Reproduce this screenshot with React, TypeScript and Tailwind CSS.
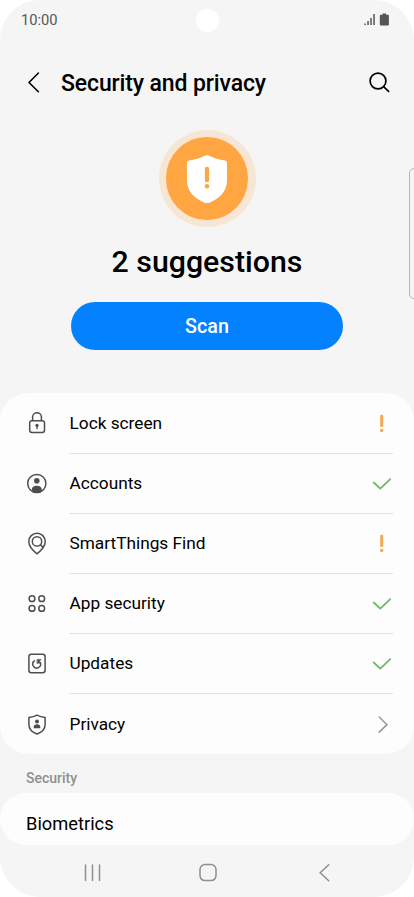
import type { ReactNode } from "react";

type Status = "warning" | "ok" | "more";

const items: { label: string; icon: string; status: Status }[] = [
  { label: "Lock screen", icon: "lock", status: "warning" },
  { label: "Accounts", icon: "account", status: "ok" },
  { label: "SmartThings Find", icon: "find", status: "warning" },
  { label: "App security", icon: "apps", status: "ok" },
  { label: "Updates", icon: "update", status: "ok" },
  { label: "Privacy", icon: "privacy", status: "more" },
];

const icons: Record<string, ReactNode> = {
  lock: (
    <>
      <rect x="4.7" y="8.7" width="14.8" height="11.8" rx="2.2" />
      <path d="M7.6 8.5V5.1a4.4 4.4 0 0 1 8.8 0v3.4" />
      <circle cx="12" cy="13.3" r="1.6" fill="currentColor" stroke="none" />
      <path d="M12 13.5v3.2" strokeWidth="1.3" />
    </>
  ),
  account: (
    <>
      <circle cx="11.8" cy="11.5" r="9.1" />
      <circle cx="11.8" cy="8.8" r="2.8" fill="currentColor" stroke="none" />
      <path d="M6.8 18.9v-1.2c0-2.4 1.900-3.900 5-3.900s5 1.500 5 3.900v1.200a9 9 0 0 1-10 0z" fill="currentColor" stroke="none" />
    </>
  ),
  find: (
    <>
      <path d="M12 21.800C8 18.600 3.800 14.200 3.800 9.400a8.200 8.200 0 0 1 16.400 0c0 4.800-4.200 9.200-8.200 12.400z" />
      <circle cx="12" cy="9.400" r="4.700" />
      <path d="M15.300 12.700l2.900 2.700" />
    </>
  ),
  apps: (
    <>
      <circle cx="7" cy="6.700" r="2.900" />
      <circle cx="16.700" cy="6.700" r="2.900" />
      <circle cx="7" cy="16.400" r="2.900" />
      <circle cx="16.700" cy="16.400" r="2.900" />
    </>
  ),
  update: (
    <>
      <rect x="3.900" y="2.200" width="16.200" height="18.600" rx="2.500" />
      <path d="M9.400 8.900a3.900 3.900 0 1 0 5.900 1.700" />
      <path d="M12.300 7.400h3.900l-1.700 1.500.3 2.200-2.500.3z" fill="currentColor" strokeWidth="0.600" />
    </>
  ),
  privacy: (
    <>
      <path d="M12 2.100c2.500 1.300 5 2 8.100 2.400v7.200c0 4.700-3.600 7.600-8.100 9.300-4.500-1.700-8.100-4.600-8.100-9.300V4.500c3.100-.4 5.600-1.100 8.100-2.400z" />
      <circle cx="12" cy="8.500" r="2" fill="currentColor" stroke="none" />
      <path d="M8.700 15.200V14c0-1.700 1.400-2.700 3.300-2.700s3.300 1 3.300 2.700v1.200z" fill="currentColor" stroke="none" />
    </>
  ),
};

const StatusIcon = ({ status }: { status: Status }) => {
  if (status === "warning") {
    return (
      <svg viewBox="0 0 20 24" className="h-6 w-5 text-[#f3a952]" fill="currentColor">
        <rect x="8.200" y="2.700" width="3" height="12.300" rx="1.200" />
        <circle cx="9.700" cy="18.400" r="1.700" />
      </svg>
    );
  }
  if (status === "ok") {
    return (
      <svg viewBox="0 0 20 24" className="h-6 w-5 text-[#6aba64]" fill="none" stroke="currentColor" strokeWidth="1.800" strokeLinecap="round" strokeLinejoin="round">
        <path d="M1.700 10.500l6.600 6.100L18.200 7.100" />
      </svg>
    );
  }
  return (
    <svg viewBox="0 0 20 24" className="h-6 w-5 text-[#99999b]" fill="none" stroke="currentColor" strokeWidth="1.600" strokeLinecap="round" strokeLinejoin="round">
      <path d="M7.200 4l7.800 7.700-7.800 7.500" />
    </svg>
  );
};

const StatusBar = () => (
  <div className="relative h-10 flex justify-between items-center pl-[21px] pr-[25px] text-[#555]">
    <span className="text-[14.7px]">10:00</span>
    <div className="absolute left-[196px] top-[9px] h-[23px] w-[23px] rounded-full bg-white" />
    <svg viewBox="0 0 25 14" className="h-3.5 w-[25px]" fill="currentColor">
      <path d="M.3 10.500h1.500V12H.3zM3.300 8h1.500v4H3.300zM6.300 5h1.500v7H6.300zM9.300 1h1.500v11H9.300z" />
      <path d="M18.500.600h3.600v1.200H24a.9.900 0 0 1 .900.900v8.900a.9.900 0 0 1-.9.900h-7.300a.9.900 0 0 1-.9-.9V2.700a.9.900 0 0 1 .9-.9h1.800z" />
    </svg>
  </div>
);

const Header = () => (
  <header className="h-[90px] flex items-center pl-[25px] pr-[23px] pb-1.5">
    <svg viewBox="0 0 20 24" className="h-6 w-5" fill="none" stroke="currentColor" strokeWidth="1.600" strokeLinecap="round" strokeLinejoin="round">
      <path d="M13.400 3L4 12.500l9.400 9.200" />
    </svg>
    <h1 className="ml-4 pt-[5px] text-[23px] tracking-[-0.12px] font-medium">Security and privacy</h1>
    <svg viewBox="0 0 24 24" className="ml-auto h-6 w-6" fill="none" stroke="currentColor" strokeWidth="1.700" strokeLinecap="round">
      <circle cx="11" cy="11" r="7.900" />
      <path d="M16.800 16.800l4.800 4.500" />
    </svg>
  </header>
);

const Overview = () => (
  <section className="h-[263px] flex flex-col items-center">
    <div className="h-[97px] w-[97px] rounded-full bg-[#f7e6d4] flex items-center justify-center">
      <div className="h-[83px] w-[82px] rounded-full bg-[#ffa643] flex items-center justify-center">
        <svg viewBox="0 0 40 48" className="h-12 w-10">
          <path d="M18.300.600q1.700-.9 3.400 0c5 2.500 10.600 4.300 16.300 4.900q2 .2 2 2.300v17.500c0 11.500-7.500 18-17.800 22.500q-2.200.9-4.400 0C7.500 43.300 0 36.800 0 25.300V7.800q0-2.100 2-2.300C7.700 4.900 13.300 3.100 18.300.600z" fill="#fff" />
          <rect x="17.900" y="11.700" width="4.200" height="15.500" rx="1.800" fill="#ffa643" />
          <circle cx="20" cy="31.200" r="2.300" fill="#ffa643" />
        </svg>
      </div>
    </div>
    <h2 className="mt-[15px] text-[30.3px] leading-10 font-medium">2 suggestions</h2>
    <button className="mt-5 h-[47.5px] w-[272px] rounded-full bg-[#0381fe] text-white text-[19.7px] font-medium pt-[3px]">Scan</button>
  </section>
);

const NavBar = () => (
  <nav className="h-[52px] text-[#8f8f8f]">
    <div className="h-full flex items-center justify-between pl-20 pr-[78px] pt-1">
      <svg viewBox="0 0 24 24" className="h-6 w-6" fill="none" stroke="currentColor" strokeWidth="1.500" strokeLinecap="round">
        <path d="M5.500 4v15.500M12.500 4v15.500M19.500 4v15.500" />
      </svg>
      <svg viewBox="0 0 24 24" className="h-6 w-6" fill="none" stroke="currentColor" strokeWidth="1.500">
        <rect x="4" y="3.600" width="16" height="16" rx="5" />
      </svg>
      <svg viewBox="0 0 24 24" className="h-6 w-6" fill="none" stroke="currentColor" strokeWidth="1.500" strokeLinecap="round">
        <path d="M16.700 3.700L8.200 11.700l8.500 8" />
      </svg>
    </div>
  </nav>
);

const App = () => {
  return (
    <div className="h-[897px] w-[414px] bg-white font-[Roboto,sans-serif]">
      <main className="relative h-full w-full overflow-hidden rounded-[40px] bg-[#f5f5f5] text-black flex flex-col">
        <StatusBar />
        <Header />
        <Overview />
        <div className="absolute left-[409px] top-[168px] h-[131px] w-4 rounded-[5px] border border-[#b5b5b5]" />
        <ul className="h-[361px] shrink-0 rounded-[28px] bg-[#fdfdfd] flex flex-col pt-px">
          {items.map((item, index) => (
            <li key={item.label} className="h-[60.1px] shrink-0 flex items-center pl-[25px] pr-[21px]">
              <svg viewBox="0 0 24 24" className="h-6 w-6 text-[#4e4e4e]" fill="none" stroke="currentColor" strokeWidth="1.500" strokeLinecap="round" strokeLinejoin="round">
                {icons[item.icon]}
              </svg>
              <div className={`ml-5 h-full flex-1 flex items-center justify-between ${index < items.length - 1 ? "border-b border-[#e2e2e2]" : ""}`}>
                <span className="pt-px pl-[0.5px] text-[17.25px]">{item.label}</span>
                <div className="pr-px">
                  <StatusIcon status={item.status} />
                </div>
              </div>
            </li>
          ))}
        </ul>
        <h3 className="h-[39px] pt-[14px] pl-[26px] text-[14px] leading-5 font-medium text-[#8f8f8f]">Security</h3>
        <div className="h-[52px] rounded-[28px] bg-[#fdfdfd] flex items-center pl-[26px] pt-2.5 text-[18.3px]">Biometrics</div>
        <NavBar />
      </main>
    </div>
  );
};

export default App;
